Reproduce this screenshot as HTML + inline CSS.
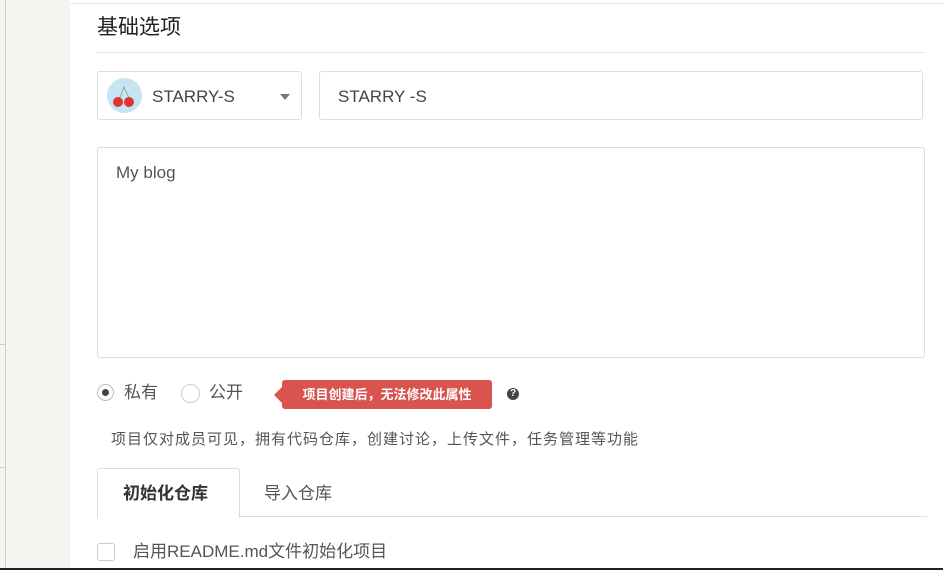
<!DOCTYPE html>
<html><head><meta charset="utf-8"><style>
body{margin:0;width:943px;height:570px;overflow:hidden;background:#fff;font-family:"Liberation Sans","Noto Sans CJK SC",sans-serif;position:relative;color:#333}
.a{position:absolute;line-height:1.2}
</style></head><body>
<div class="a" style="left:0;top:0;width:70px;height:570px;background:#f5f4f0"></div>
<div class="a" style="left:5px;top:0;width:1px;height:570px;background:#ccc"></div>
<div class="a" style="left:0;top:344px;width:5px;height:1px;background:#ccc"></div>
<div class="a" style="left:0;top:467px;width:5px;height:1px;background:#ccc"></div>
<div class="a" style="left:70px;top:3px;width:873px;height:1px;background:#e6e6e6"></div>
<div class="a" style="left:97px;top:15px;font-size:21px;color:#222">基础选项</div>
<div class="a" style="left:97px;top:52px;width:828px;height:1px;background:#e5e5e5"></div>
<div class="a" style="left:97px;top:71px;width:203px;height:47px;border:1px solid #ddd;border-radius:3px"></div>
<svg class="a" style="left:107px;top:78px" width="35" height="35"><circle cx="17.5" cy="17.5" r="17.5" fill="#c6e4f1"/><path d="M12 22 L17 9 L23 22" stroke="#8fb08a" fill="none" stroke-width="1"/><circle cx="11" cy="24" r="5" fill="#d33"/><circle cx="22" cy="24" r="5" fill="#d33"/></svg>
<div class="a" style="left:152px;top:87px;font-size:17px;color:#444">STARRY-S</div>
<div class="a" style="left:280px;top:94px;border-left:5px solid transparent;border-right:5px solid transparent;border-top:6px solid #777"></div>
<div class="a" style="left:319px;top:71px;width:602px;height:47px;border:1px solid #ddd;border-radius:3px"></div>
<div class="a" style="left:338px;top:87px;font-size:17px;color:#444">STARRY -S</div>
<div class="a" style="left:97px;top:147px;width:826px;height:209px;border:1px solid #ddd;border-radius:3px"></div>
<div class="a" style="left:116px;top:163px;font-size:17px;color:#555">My blog</div>
<div class="a" style="left:97px;top:384px;width:17px;height:17px;border:1px solid #bbb;border-radius:50%;box-sizing:border-box"></div>
<div class="a" style="left:102px;top:389px;width:7px;height:7px;background:#444;border-radius:50%"></div>
<div class="a" style="left:124px;top:383px;font-size:17px;color:#555">私有</div>
<div class="a" style="left:181px;top:384px;width:19px;height:19px;border:1px solid #ccc;border-radius:50%;box-sizing:border-box"></div>
<div class="a" style="left:209px;top:383px;font-size:17px;color:#555">公开</div>
<div class="a" style="left:274px;top:387px;border-top:8px solid transparent;border-bottom:8px solid transparent;border-right:8px solid #d9534f"></div>
<div class="a" style="left:282px;top:380px;width:210px;height:29px;background:#d9534f;border-radius:3px;color:#fff;font-size:13px;font-weight:bold;line-height:29px;text-align:center">项目创建后，无法修改此属性</div>
<div class="a" style="left:507px;top:388px;width:12px;height:12px;border-radius:50%;background:#444;color:#fff;font-size:10px;font-weight:bold;line-height:12px;text-align:center">?</div>
<div class="a" style="left:111px;top:431px;font-size:15px;letter-spacing:1px;color:#555">项目仅对成员可见，拥有代码仓库，创建讨论，上传文件，任务管理等功能</div>
<div class="a" style="left:97px;top:516px;width:830px;height:1px;background:#ddd"></div>
<div class="a" style="left:97px;top:468px;width:141px;height:49px;border:1px solid #ddd;border-bottom:none;border-radius:3px 3px 0 0;background:#fff"></div>
<div class="a" style="left:123px;top:484px;font-size:17px;font-weight:bold;color:#333">初始化仓库</div>
<div class="a" style="left:264px;top:484px;font-size:17px;color:#555">导入仓库</div>
<div class="a" style="left:97px;top:543px;width:18px;height:18px;border:1px solid #ccc;border-radius:3px;box-sizing:border-box"></div>
<div class="a" style="left:133px;top:542px;font-size:17px;color:#555">启用README.md文件初始化项目</div>
<div class="a" style="left:0;top:568px;width:943px;height:2px;background:#222"></div>
</body></html>
